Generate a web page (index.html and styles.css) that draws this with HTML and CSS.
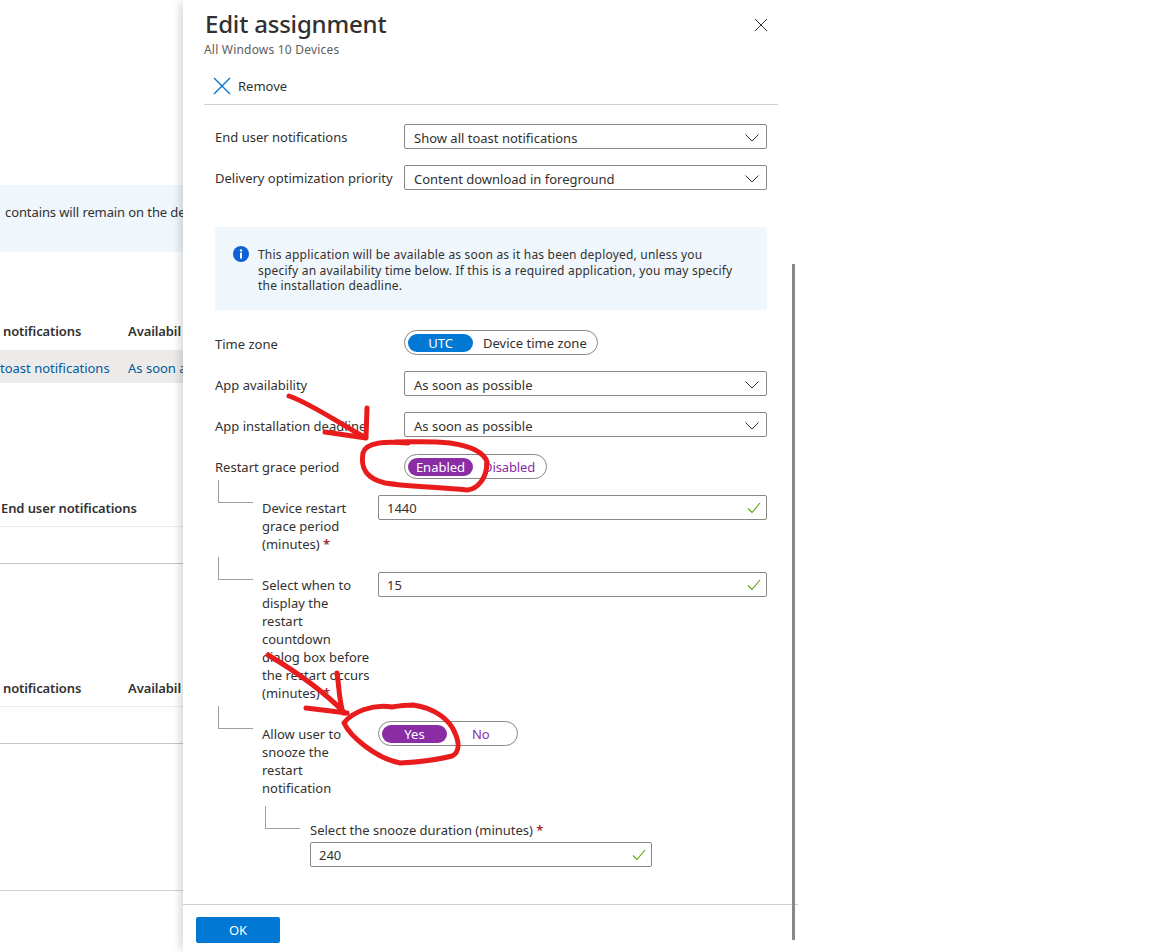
FILE: index.html
```html
<!DOCTYPE html>
<html lang="en">
<head>
    <meta charset="utf-8"/>
    <title>Edit assignment</title>
    <link rel="stylesheet" href="styles.css">
</head>
<body>

<div class="page">
    <div class="banner">contains will remain on the dev</div>

    <div class="headRow firstHead">
        <span class="colA">notifications</span>
        <span class="colB">Availabil</span>
    </div>
    <div class="dataRow">
        <span class="colA">toast notifications</span>
        <span class="colB">As soon a</span>
    </div>

    <div class="plainHead">End user notifications</div>
    <div class="emptyRow"></div>

    <div class="headRow lastHead">
        <span class="colA">notifications</span>
        <span class="colB">Availabil</span>
    </div>
    <div class="emptyRow"></div>
    <div class="endLine"></div>
</div>

<div class="blade">
    <div class="bladeHead">
        <div>
            <h1>Edit assignment</h1>
            <div class="subtitle">All Windows 10 Devices</div>
        </div>
        <svg class="closeIcon" width="14" height="14" viewBox="0 0 14 14"><path d="M1 1L13 13M13 1L1 13" stroke="#323130" fill="none"/></svg>
    </div>

    <div class="toolbar">
        <svg width="18" height="18" viewBox="0 0 18 18"><path d="M1 1L17 17M17 1L1 17" stroke="#0078d4" stroke-width="1.4" fill="none"/></svg>
        <span>Remove</span>
    </div>

    <div class="bladeBody">
        <div class="formRow">
            <label>End user notifications</label>
            <div class="field">Show all toast notifications
                <svg class="chevron" width="14" height="8" viewBox="0 0 14 8"><path d="M0.5 0.5L7 7L13.5 0.5" stroke="#323130" fill="none"/></svg>
            </div>
        </div>
        <div class="formRow">
            <label>Delivery optimization priority</label>
            <div class="field">Content download in foreground
                <svg class="chevron" width="14" height="8" viewBox="0 0 14 8"><path d="M0.5 0.5L7 7L13.5 0.5" stroke="#323130" fill="none"/></svg>
            </div>
        </div>

        <div class="infoBox">
            <svg width="16" height="16" viewBox="0 0 16 16"><circle cx="8" cy="8" r="8" fill="#0f62d6"/><rect x="7" y="6.6" width="2" height="6" fill="#fff"/><circle cx="8" cy="4.4" r="1.2" fill="#fff"/></svg>
            <p>This application will be available as soon as it has been deployed, unless you<br>specify an availability time below. If this is a required application, you may specify<br>the installation deadline.</p>
        </div>

        <div class="formRow">
            <label>Time zone</label>
            <div class="toggle">
                <span class="on blue">UTC</span>
                <span class="off dark">Device time zone</span>
            </div>
        </div>
        <div class="formRow">
            <label>App availability</label>
            <div class="field">As soon as possible
                <svg class="chevron" width="14" height="8" viewBox="0 0 14 8"><path d="M0.5 0.5L7 7L13.5 0.5" stroke="#323130" fill="none"/></svg>
            </div>
        </div>
        <div class="formRow">
            <label>App installation deadline</label>
            <div class="field">As soon as possible
                <svg class="chevron" width="14" height="8" viewBox="0 0 14 8"><path d="M0.5 0.5L7 7L13.5 0.5" stroke="#323130" fill="none"/></svg>
            </div>
        </div>
        <div class="formRow graceRow">
            <label>Restart grace period</label>
            <div class="toggle">
                <span class="on">Enabled</span>
                <span class="off">Disabled</span>
            </div>
        </div>

        <div class="subRow">
            <div class="elbow"></div>
            <label>Device restart<br>grace period<br>(minutes) <b>*</b></label>
            <div class="field">1440
                <svg class="check" width="14" height="12" viewBox="0 0 14 12"><path d="M1 6.5L5 10.5L13 1" stroke="#57a300" stroke-width="1.1" fill="none"/></svg>
            </div>
        </div>
        <div class="subRow">
            <div class="elbow"></div>
            <label>Select when to<br>display the<br>restart<br>countdown<br>dialog box before<br>the restart occurs<br>(minutes) <b>*</b></label>
            <div class="field">15
                <svg class="check" width="14" height="12" viewBox="0 0 14 12"><path d="M1 6.5L5 10.5L13 1" stroke="#57a300" stroke-width="1.1" fill="none"/></svg>
            </div>
        </div>
        <div class="subRow">
            <div class="elbow"></div>
            <label>Allow user to<br>snooze the<br>restart<br>notification</label>
            <div class="toggle">
                <span class="on">Yes</span>
                <span class="off wide">No</span>
            </div>
        </div>

        <div class="snoozeRow">
            <div class="elbow"></div>
            <div class="snoozeField">
                <label>Select the snooze duration (minutes) <b>*</b></label>
                <div class="field">240
                    <svg class="check" width="14" height="12" viewBox="0 0 14 12"><path d="M1 6.5L5 10.5L13 1" stroke="#57a300" stroke-width="1.1" fill="none"/></svg>
                </div>
            </div>
        </div>
    </div>

    <div class="bladeFoot">
        <button class="okButton">OK</button>
    </div>

    <div class="scrollThumb"></div>
</div>

<!-- red pen marks drawn on the screenshot -->
<svg class="markup" width="1173" height="952" viewBox="0 0 1173 952">
    <path d="M289 396C312 404 340 424 366 438M367 408L366 438M325 432L366 438"/>
    <path d="M408 443C385 441 366 442 363 453C360 470 368 479 385 483C410 487 440 487 467 490C478 489 487 478 487 462C484 452 470 446 450 443C430 441 415 442 396 442"/>
    <path d="M268 655C290 668 320 688 345 713M337 673C339 685 339 700 343 713M306 708L347 713"/>
    <path d="M392 707C372 704 352 712 344 723C350 736 375 758 400 763C420 762 440 759 452 756C460 752 459 742 455 733C450 720 435 708 413 705C405 705 398 706 392 707"/>
</svg>

</body>
</html>
```

FILE: styles.css
```css
body
{
    margin: 0;
    height: 952px;
    overflow: hidden;
    background: #ffffff;
    font-family: "Noto Sans", "Open Sans", sans-serif;
    font-size: 13px;
    color: #323130;
}

.page
{
    width: 183px;
    padding-top: 185px;
    white-space: nowrap;
}

.banner
{
    height: 67px;
    padding: 18px 0 0 5px;
    box-sizing: border-box;
    background: #eff6fc;
    line-height: 18px;
    letter-spacing: -0.1px;
}

.headRow
{
    display: flex;
    height: 20px;
    line-height: 20px;
    font-weight: 600;
    letter-spacing: -0.1px;
}

.firstHead
{
    margin-top: 69px;
    height: 29px;
}

.lastHead
{
    margin-top: 114px;
    height: 28px;
    border-bottom: 1px solid #edebe9;
}

.colA
{
    width: 125px;
    padding-left: 3px;
    flex: none;
}

.colB
{
    flex: none;
}

.dataRow
{
    display: flex;
    height: 33px;
    line-height: 36px;
    background: #edebe9;
    color: #005a9e;
}

.dataRow .colA
{
    width: 128px;
    padding-left: 0;
}

.plainHead
{
    margin-top: 115px;
    height: 28px;
    line-height: 20px;
    padding-left: 1px;
    font-weight: 600;
    letter-spacing: -0.1px;
    border-bottom: 1px solid #edebe9;
}

.emptyRow
{
    height: 36px;
    border-bottom: 1px solid #c8c6c4;
}

.endLine
{
    margin-top: 146px;
    border-bottom: 1px solid #d2d0ce;
}

.blade
{
    position: absolute;
    top: 0;
    left: 183px;
    width: 615px;
    height: 952px;
    display: flex;
    flex-direction: column;
    background: #ffffff;
    box-shadow: -6px 0 8px -3px rgba(0, 0, 0, 0.16);
}

.bladeHead
{
    display: flex;
    justify-content: space-between;
    height: 68px;
    padding: 7px 30px 0 21px;
    box-sizing: border-box;
}

h1
{
    margin: 0 0 1px 1px;
    font-size: 24px;
    line-height: 34px;
    font-weight: 500;
    letter-spacing: -0.2px;
}

.subtitle
{
    font-size: 12px;
    line-height: 16px;
    letter-spacing: 0.2px;
    color: #605e5c;
}

.closeIcon
{
    margin-top: 11px;
}

.toolbar
{
    display: flex;
    align-items: center;
    gap: 7px;
    height: 36px;
    margin: 0 20px 0 21px;
    padding-left: 9px;
    border-bottom: 1px solid #d2d0ce;
}

.bladeBody
{
    flex: 1;
    padding: 19px 31px 0 32px;
}

.formRow
{
    display: grid;
    grid-template-columns: 189px 1fr;
    align-items: center;
    height: 25px;
    margin-bottom: 16px;
}

.infoBox ~ .formRow label
{
    padding-top: 2px;
}

.field
{
    position: relative;
    height: 25px;
    line-height: 26px;
    padding-left: 9px;
    box-sizing: border-box;
    border: 1px solid #8a8886;
    border-radius: 2px;
}

.chevron
{
    position: absolute;
    top: 9px;
    right: 7px;
}

.check
{
    position: absolute;
    top: 6px;
    right: 5px;
}

.infoBox
{
    display: flex;
    gap: 9px;
    height: 83px;
    margin: 37px 0 20px;
    padding: 20px 18px 0;
    box-sizing: border-box;
    background: #eff6fc;
    border-radius: 2px;
}

.infoBox svg
{
    flex: none;
    margin-top: -1px;
}

.infoBox p
{
    margin: 0;
    font-size: 12px;
    line-height: 15.5px;
    letter-spacing: 0.2px;
    white-space: nowrap;
}

.toggle
{
    display: inline-flex;
    align-items: center;
    justify-self: start;
    width: fit-content;
    height: 25px;
    padding: 0 11px 0 3px;
    box-sizing: border-box;
    border: 1px solid #8a8886;
    border-radius: 13px;
    color: #8a2da5;
}

.on
{
    width: 65px;
    height: 18px;
    line-height: 18px;
    text-align: center;
    color: #ffffff;
    background: #8a2da5;
    border-radius: 9px;
}

.on.blue
{
    background: #0078d4;
}

.off
{
    padding-left: 10px;
    letter-spacing: -0.1px;
}

.off.dark
{
    color: #323130;
    letter-spacing: 0;
    margin-right: -1px;
}

.off.wide
{
    padding: 0 16px 0 25px;
}

.graceRow
{
    margin-top: 17px;
}

.infoBox ~ .graceRow label
{
    padding-top: 0;
}

.subRow
{
    display: grid;
    grid-template-columns: 47px 116px 1fr;
    margin-bottom: 19px;
}

.subRow label
{
    padding-top: 4px;
    line-height: 18px;
    white-space: nowrap;
}

.subRow .field, .snoozeField .field
{
    padding-left: 8px;
    line-height: 24px;
}

.elbow
{
    width: 35px;
    height: 23px;
    margin: -15px 0 0 3px;
    box-sizing: border-box;
    border-left: 1px solid #a19f9d;
    border-bottom: 1px solid #a19f9d;
}

.snoozeRow
{
    display: flex;
    margin: 24px 0 0 50px;
}

.snoozeRow .elbow
{
    margin-left: 0;
    flex: none;
}

.snoozeField
{
    width: 342px;
    margin-left: 10px;
}

.snoozeField label
{
    display: block;
    height: 21px;
    line-height: 18px;
}

b
{
    color: #a4262c;
    font-weight: 600;
}

.bladeFoot
{
    height: 48px;
    padding: 12px 0 0 13px;
    box-sizing: border-box;
    border-top: 1px solid #d2d0ce;
}

.okButton
{
    width: 84px;
    height: 26px;
    border: none;
    border-radius: 2px;
    background: #0078d4;
    color: #ffffff;
    font: inherit;
}

.scrollThumb
{
    position: absolute;
    top: 264px;
    left: 609px;
    width: 3px;
    height: 676px;
    background: #8a8886;
}

.markup
{
    position: absolute;
    top: 0;
    left: 0;
    pointer-events: none;
}

.markup path
{
    fill: none;
    stroke: #e81c1c;
    stroke-width: 5;
    stroke-linecap: round;
    stroke-linejoin: round;
}
```
